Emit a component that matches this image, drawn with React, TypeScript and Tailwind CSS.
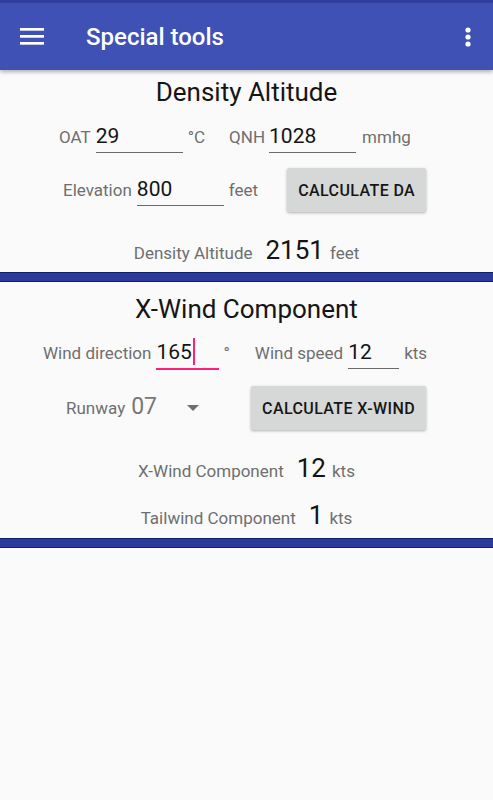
const label = "text-[17px] leading-[24px] text-[#6f6f6f]";

type FieldProps = {
  value: string;
  width: string;
  focused?: boolean;
};

const Field = ({ value, width, focused }: FieldProps) => (
  <span
    className={`inline-block ${width} text-[21px] leading-[24px] text-[#141414] pb-[4px] ${
      focused ? "border-b-2 border-[#ff1f7a]" : "border-b border-[#6a6a6a]"
    }`}>
    <span className="relative">
      {value}
      {focused && (
        <span className="absolute left-full ml-[1px] top-[-2px] w-[2px] h-[27px] bg-[#ff1f7a]" />
      )}
    </span>
  </span>
);

const RaisedButton = ({ text, className }: { text: string; className?: string }) => (
  <button
    className={`bg-[#d6d7d7] rounded-[2px] px-[11px] pt-[13px] pb-[11px] text-[16px] leading-[20px] tracking-[0.4px] font-medium text-[#161616] shadow-[0_1px_3px_rgba(0,0,0,0.3)] ${className ?? ""}`}>
    {text}
  </button>
);

const Result = ({ name, value, unit, className }: { name: string; value: string; unit: string; className?: string }) => (
  <div className={`flex items-baseline justify-center ${className ?? ""}`}>
    <span className={label}>{name}</span>
    <span className="ml-[13px] text-[26px] leading-[32px] text-[#141414]">{value}</span>
    <span className={`ml-[6px] ${label}`}>{unit}</span>
  </div>
);

const Divider = ({ className }: { className?: string }) => (
  <div className={`h-[10px] bg-[#2d3a9c] border-y border-[#141f6b] ${className ?? ""}`} />
);

export default function App() {
  return (
    <div
      className="w-[493px] h-[800px] bg-[#fafafa] overflow-hidden"
      style={{ fontFamily: "Roboto, 'Noto Sans', sans-serif" }}>
      {/* app bar */}
      <div className="relative z-10 shadow-[0_2px_4px_rgba(0,0,0,0.3)]">
        <div className="h-[3px] bg-[#303f9f]" />
        <div className="h-[67px] bg-[#3f51b5] flex items-center">
          <svg width="24" height="18" viewBox="0 0 24 18" className="ml-[20px]">
            <rect x="0" y="0" width="24" height="2.7" fill="white" />
            <rect x="0" y="7" width="24" height="2.7" fill="white" />
            <rect x="0" y="14" width="24" height="2.7" fill="white" />
          </svg>
          <span className="ml-[42px] text-[24px] font-medium text-white">Special tools</span>
          <svg width="6" height="20" viewBox="0 0 6 20" className="ml-auto mr-[22px]">
            <circle cx="3" cy="3" r="2.6" fill="white" />
            <circle cx="3" cy="10" r="2.6" fill="white" />
            <circle cx="3" cy="17" r="2.6" fill="white" />
          </svg>
        </div>
      </div>

      {/* density altitude */}
      <h2 className="pt-[6px] text-center text-[26px] leading-[32px] text-[#151515]">Density Altitude</h2>

      <div className="mt-[16px] flex items-baseline">
        <span className={`ml-[59px] ${label}`}>OAT</span>
        <span className="ml-[5px]"><Field value="29" width="w-[87px]" /></span>
        <span className={`ml-[5px] ${label}`}>°C</span>
        <span className={`ml-[24px] ${label}`}>QNH</span>
        <span className="ml-[4px]"><Field value="1028" width="w-[87px]" /></span>
        <span className={`ml-[6px] ${label}`}>mmhg</span>
      </div>

      <div className="mt-[15px] flex items-baseline">
        <span className={`ml-[63px] ${label}`}>Elevation</span>
        <span className="ml-[5px]"><Field value="800" width="w-[87px]" /></span>
        <span className={`ml-[5px] ${label}`}>feet</span>
        <RaisedButton text="CALCULATE DA" className="ml-[29px]" />
      </div>

      <Result name="Density Altitude" value="2151" unit="feet" className="mt-[22px]" />

      <Divider className="mt-[6px]" />

      {/* x-wind */}
      <h2 className="mt-[11px] text-center text-[26px] leading-[32px] text-[#151515]">X-Wind Component</h2>

      <div className="mt-[15px] flex items-baseline">
        <span className={`ml-[43px] ${label}`}>Wind direction</span>
        <span className="ml-[5px]"><Field value="165" width="w-[63px]" focused /></span>
        <span className={`ml-[4px] ${label}`}>°</span>
        <span className={`ml-[25px] ${label}`}>Wind speed</span>
        <span className="ml-[5px]"><Field value="12" width="w-[51px]" /></span>
        <span className={`ml-[5px] ${label}`}>kts</span>
      </div>

      <div className="mt-[16px] flex items-baseline">
        <span className={`ml-[66px] ${label}`}>Runway</span>
        <span className="ml-[6px] text-[23px] leading-[28px] text-[#777777]">07</span>
        <svg width="12" height="6" viewBox="0 0 12 6" className="ml-[30px] self-center">
          <path d="M0 0 L12 0 L6 6 Z" fill="#6f6f6f" />
        </svg>
        <RaisedButton text="CALCULATE X-WIND" className="ml-[52px]" />
      </div>

      <Result name="X-Wind Component" value="12" unit="kts" className="mt-[22px]" />
      <Result name="Tailwind Component" value="1" unit="kts" className="mt-[15px]" />

      <Divider className="mt-[7px]" />
    </div>
  );
}
